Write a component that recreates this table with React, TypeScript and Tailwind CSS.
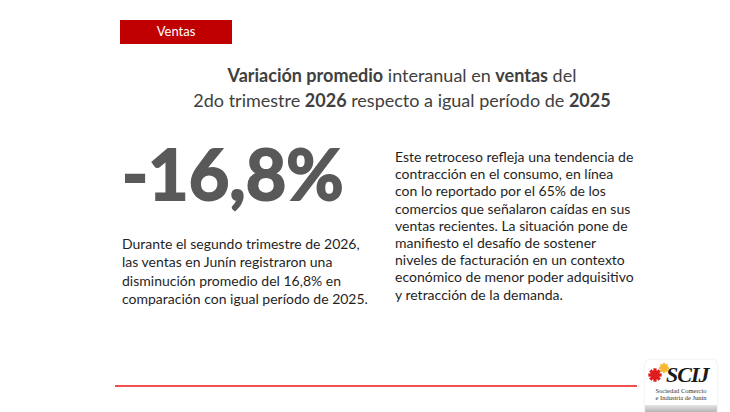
import React from "react";

const leftLines = [
  "Durante el segundo trimestre de 2026,",
  "las ventas en Junín registraron una",
  "disminución promedio del 16,8% en",
  "comparación con igual período de 2025.",
];

const rightLines = [
  "Este retroceso refleja una tendencia de",
  "contracción en el consumo, en línea",
  "con lo reportado por el 65% de los",
  "comercios que señalaron caídas en sus",
  "ventas recientes. La situación pone de",
  "manifiesto el desafío de sostener",
  "niveles de facturación en un contexto",
  "económico de menor poder adquisitivo",
  "y retracción de la demanda.",
];

function Gear({ cx, cy, r, fill }: { cx: number; cy: number; r: number; fill: string }) {
  const teeth = Array.from({ length: 8 }, (_, i) => i * 45);
  return (
    <g fill={fill}>
      <circle cx={cx} cy={cy} r={r} />
      {teeth.map((a) => (
        <rect
          key={a}
          x={cx - r * 0.35}
          y={cy - r * 1.45}
          width={r * 0.7}
          height={r * 0.7}
          transform={`rotate(${a} ${cx} ${cy})`}
        />
      ))}
    </g>
  );
}

function Logo() {
  return (
    <div className="flex h-[54px] w-[72px] flex-col overflow-hidden rounded-sm bg-white shadow-[0_0_2px_rgba(0,0,0,0.15)]">
      <div className="relative flex-1 px-[2px] pt-[1px]">
        <svg width="24" height="22" viewBox="0 0 24 22" className="absolute left-[3px] top-[2px]">
          <Gear cx={7} cy={13} r={4.6} fill="#e01b1b" />
          <Gear cx={16} cy={6} r={3.4} fill="#f5b82e" />
        </svg>
        <div
          className="pl-[19px] pt-[4px] text-[22px] font-bold leading-[20px] italic tracking-[-1px] text-[#1a1a1a]"
          style={{ fontFamily: '"Liberation Serif", "DejaVu Serif", serif' }}
        >
          SCIJ
        </div>
        <div
          className="mt-[2px] whitespace-nowrap text-center text-[6.5px] leading-[7px] text-[#333]"
          style={{ fontFamily: '"Liberation Serif", serif' }}
        >
          Sociedad Comercio
          <br />
          e Industria de Junín
        </div>
      </div>
      <div className="h-[9px] bg-gradient-to-b from-[#e6e6e6] to-[#a8a8a8]" />
    </div>
  );
}

export default function App() {
  return (
    <div
      className="relative h-[412px] w-[730px] overflow-hidden bg-white text-[#404040]"
      style={{ fontFamily: 'Lato, "Open Sans", sans-serif' }}
    >
      <div className="pl-[120px] pt-[20px]">
        <div className="flex h-[24px] w-[112px] items-center justify-center bg-[#c00000] text-[13px] text-white">
          Ventas
        </div>
      </div>

      <div className="mt-[19px] text-center text-[18px] leading-[25px] text-[#404040]">
        <div className="pl-[74px]">
          <b>Variación promedio</b> interanual en <b>ventas</b> del
          <br />
          2do trimestre <b>2026</b> respecto a igual período de <b>2025</b>
        </div>
      </div>

      <div className="mt-[20px] flex">
        <div className="ml-[122px] w-[273px]">
          <div className="text-[70px] font-bold leading-[80px] tracking-[0px] text-[#595959] [-webkit-text-stroke:2px_#595959]">
            -16,8%
          </div>
          <div className="mt-[22px] whitespace-nowrap text-[14px] leading-[18.3px] text-[#1f1f1f]">
            {leftLines.map((l) => (
              <div key={l}>{l}</div>
            ))}
          </div>
        </div>
        <div className="whitespace-nowrap pt-[15px] text-[14px] leading-[17.2px] text-[#1f1f1f]">
          {rightLines.map((l) => (
            <div key={l}>{l}</div>
          ))}
        </div>
      </div>

      <div className="absolute bottom-0 left-0 right-0 flex items-center">
        <div className="ml-[115px] h-[2px] w-[522px] bg-[#f05050]" />
        <div className="mb-[-2px] ml-[8px]">
          <Logo />
        </div>
      </div>
    </div>
  );
}
